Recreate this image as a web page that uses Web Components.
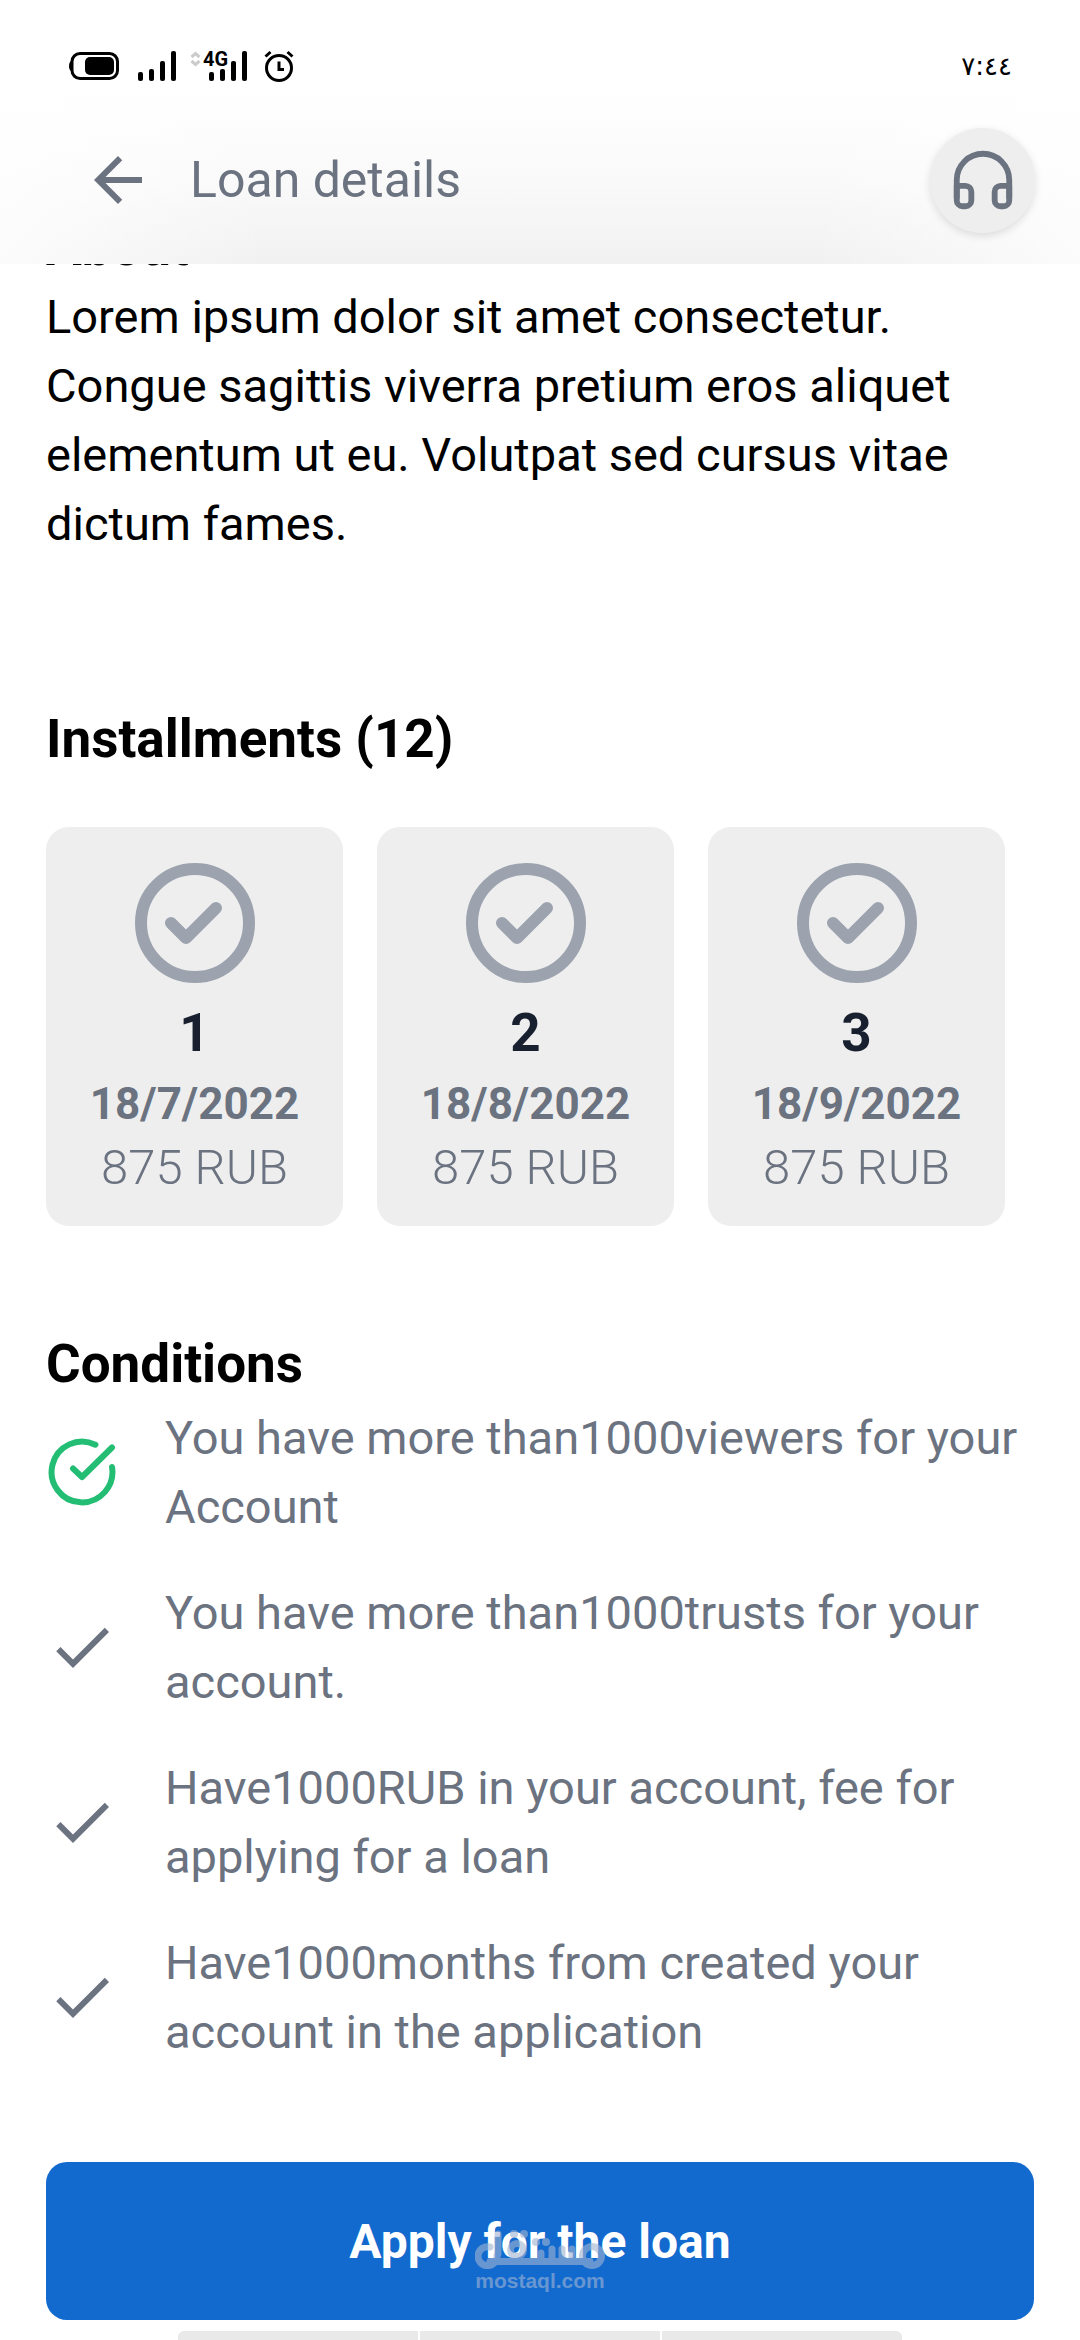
<!DOCTYPE html>
<html lang="en">
<head>
<meta charset="utf-8">
<meta name="viewport" content="width=device-width, initial-scale=1">
<title>Loan details</title>
<style>
  :root {
    --ink: #000;
    --muted: #6b7280;
    --soft: #9ca3af;
    --card: #eee;
    --brand: #126acf;
    --ok: #24bd74;
    --edge: 46px;
  }
  body { margin: 0; background: #fff; color: var(--ink); font: 400 47px/69px Roboto, "Noto Sans", sans-serif; }
</style>
</head>
<body>
<loan-page></loan-page>

<script>
const define = (name, html) => {
  const template = document.createElement('template');
  template.innerHTML = html;
  customElements.define(name, class extends HTMLElement {
    constructor() {
      super();
      this.attachShadow({ mode: 'open' }).append(template.content.cloneNode(true));
    }
  });
};

define('status-bar', `
  <style>
    :host { display: flex; align-items: center; justify-content: space-between; height: 96px; padding: 36px 68px 0 66px; box-sizing: border-box; color: #000; }
    svg { display: block; }
    time { font: 400 26px/34px "DejaVu Sans", sans-serif; }
    text { font: 700 20px "Liberation Sans Narrow", Roboto, sans-serif; }
  </style>
  <svg width="236" height="44" viewBox="66 44 236 44" role="img" aria-label="Battery, signal, 4G, alarm">
    <rect x="72" y="53.5" width="45.5" height="25" rx="8" fill="none" stroke="#000" stroke-width="3"/>
    <path d="M72 60.5q-3 1-3 5.5t3 5.5z"/>
    <rect x="85" y="57" width="29" height="18" rx="5"/>
    <g>
      <rect x="138" y="72" width="5" height="9" rx="2"/><rect x="149" y="69" width="5" height="12" rx="2"/>
      <rect x="160" y="61" width="5" height="20" rx="2"/><rect x="171" y="51" width="5" height="30" rx="2"/>
    </g>
    <g>
      <rect x="209" y="72" width="5" height="9" rx="2"/><rect x="220" y="69" width="5" height="12" rx="2"/>
      <rect x="231" y="61" width="5" height="20" rx="2"/><rect x="242" y="51" width="5" height="30" rx="2"/>
    </g>
    <path d="M191.500 57l4-3.500 4 3.500M191.500 61l4 3.500 4-3.500" fill="none" stroke="#ccc" stroke-width="3"/>
    <text x="203" y="66">4G</text>
    <g fill="none" stroke="#000" stroke-width="3">
      <circle cx="279" cy="68" r="12.5"/><path d="M279 61.500v8h5M265.500 56.500l5-4.500M292.500 56.500l-5-4.500"/>
    </g>
  </svg>
  <time>٧:٤٤</time>`);

define('app-header', `
  <style>
    :host {
      display: block; position: relative; z-index: 1;
      background: linear-gradient(to right, rgba(255,255,255,.75), rgba(255,255,255,0) 25%, rgba(255,255,255,0) 75%, rgba(255,255,255,.75)),
                  linear-gradient(#fff 35%, #f9f9f9 70%, #f1f1f1);
    }
    .bar { display: flex; align-items: center; height: 168px; padding: 0 45px 0 82px; }
    a { display: flex; color: var(--muted); }
    svg { display: block; }
    h1 { flex: 1; margin: 0 0 0 36px; font-size: 50px; font-weight: 400; line-height: 72px; color: var(--muted); }
    button { display: grid; place-items: center; width: 105px; height: 105px; padding: 0; border: 0; border-radius: 50%; background: var(--card); color: var(--muted); box-shadow: 0 3px 9px rgba(0,0,0,.12); }
  </style>
  <slot name="status"></slot>
  <div class="bar">
    <a href="#back" aria-label="Back">
      <svg width="72" height="72" viewBox="0 0 24 24" fill="currentColor"><path d="M20 11H7.830l5.590-5.590L12 4l-8 8 8 8 1.410-1.410L7.830 13H20v-2z"/></svg>
    </a>
    <h1><slot></slot></h1>
    <button type="button" aria-label="Support">
      <svg width="70" height="70" viewBox="0 0 24 24" fill="none" stroke="currentColor" stroke-width="2" stroke-linecap="round" stroke-linejoin="round"><path d="M3 18v-6a9 9 0 0 1 18 0v6"/><path d="M21 19a2 2 0 0 1-2 2h-1a2 2 0 0 1-2-2v-3a2 2 0 0 1 2-2h3zM3 19a2 2 0 0 0 2 2h1a2 2 0 0 0 2-2v-3a2 2 0 0 0-2-2H3z"/></svg>
    </button>
  </div>`);

define('loan-section', `
  <style>
    :host { display: block; }
    h2 { margin: 0 0 var(--title-gap, 0); font-size: 53px; line-height: 69px; font-weight: 700; }
  </style>
  <section><h2><slot name="title"></slot></h2><slot></slot></section>`);

define('installment-card', `
  <style>
    :host { display: flex; flex-direction: column; align-items: center; flex: 0 0 297px; box-sizing: border-box; padding: 24px 0 26px; border-radius: 23px; background: var(--card); color: var(--muted); }
    svg { display: block; color: var(--soft); }
    .no { margin: 4px 0; font-size: 53px; line-height: 69px; font-weight: 700; color: #182030; }
    .date { font-size: 44px; line-height: 64px; font-weight: 700; }
    .sum { font-size: 49px; line-height: 64px; font-weight: 300; }
  </style>
  <svg width="144" height="144" viewBox="0 0 24 24" fill="none" stroke="currentColor" stroke-width="2" stroke-linecap="round" stroke-linejoin="round" aria-hidden="true"><circle cx="12" cy="12" r="9"/><path d="M8 12l2.500 2.500 5-5"/></svg>
  <div class="no"><slot name="no"></slot></div>
  <div class="date"><slot name="date"></slot></div>
  <div class="sum"><slot></slot></div>`);

define('condition-item', `
  <style>
    :host { display: flex; align-items: center; gap: 47px; color: var(--muted); }
    svg { display: block; flex: none; }
    p { margin: 0; }
    .met { display: none; color: var(--ok); }
    :host([met]) .met { display: block; }
    :host([met]) .open { display: none; }
  </style>
  <svg class="met" width="72" height="72" viewBox="-36 -36 72 72" fill="none" stroke="currentColor" stroke-width="6" stroke-linecap="round" stroke-linejoin="round"><path d="M13.400-27.300A30.400 30.400 0 1 0 30-5M30-24.500L0 5l-9-8.500"/></svg>
  <svg class="open" width="72" height="72" viewBox="0 0 24 24" fill="currentColor"><path d="M9 16.170L4.830 12l-1.420 1.410L9 19 21 7l-1.410-1.410z"/></svg>
  <p><slot></slot></p>`);

define('apply-button', `
  <style>
    :host { display: grid; }
    button { grid-area: 1 / 1; height: 158px; border: 0; border-radius: 21px; background: var(--brand); color: #fff; font: inherit; font-size: 48px; font-weight: 700; }
    .mark { grid-area: 1 / 1; display: flex; flex-direction: column; align-items: center; justify-content: flex-end; padding-bottom: 27px; color: #a0b4d2; opacity: .6; pointer-events: none; }
    svg { display: block; }
    .site { font: 700 21px/24px "Liberation Sans", sans-serif; }
  </style>
  <button type="button"><slot></slot></button>
  <div class="mark">
    <svg width="130" height="42" viewBox="0 0 130 42" fill="none" stroke="currentColor" stroke-width="7" stroke-linecap="round" aria-hidden="true">
      <path d="M22 28.500a9.500 9.500 0 1 1-7-8.500M23 7v20M15 34.500h100M66 26v7M77 22v11M87 22v11M97 22v11"/>
      <circle cx="117" cy="29" r="9.500"/><circle cx="42" cy="23" r="6.500"/>
      <g fill="currentColor" stroke="none"><circle cx="39" cy="7" r="4"/><circle cx="49" cy="7" r="4"/><circle cx="61" cy="15" r="4"/><circle cx="71" cy="15" r="4"/></g>
    </svg>
    <span class="site">mostaql.com</span>
  </div>`);

define('tab-strip', `
  <style>
    :host { display: grid; grid-template-columns: repeat(3, 1fr); gap: 2px; height: 9px; margin: 0 16.500%; overflow: hidden; border-radius: 6px 6px 0 0; }
    i { background: #e9e9e9; }
  </style>
  <i></i><i></i><i></i>`);

define('loan-page', `
  <style>
    :host { display: block; overflow: hidden; }
    main { margin-top: -51px; padding: 0 var(--edge); }
    p { margin: 0; }
    .installments { margin-top: 147px; --title-gap: 53px; }
    .cards { display: flex; gap: 34px; overflow-x: auto; scrollbar-width: none; }
    .conditions { margin-top: 104px; --title-gap: 4px; }
    .list { display: flex; flex-direction: column; gap: 37px; }
    apply-button { margin: 96px 0 11px; }
  </style>
  <app-header><status-bar slot="status"></status-bar>Loan details</app-header>
  <main>
    <loan-section><span slot="title">About</span>
      <p>Lorem ipsum dolor sit amet consectetur. Congue sagittis viverra pretium eros aliquet elementum ut eu. Volutpat sed cursus vitae dictum fames.</p>
    </loan-section>
    <loan-section class="installments"><span slot="title">Installments (12)</span>
      <div class="cards">
        <installment-card><span slot="no">1</span><span slot="date">18/7/2022</span>875 RUB</installment-card>
        <installment-card><span slot="no">2</span><span slot="date">18/8/2022</span>875 RUB</installment-card>
        <installment-card><span slot="no">3</span><span slot="date">18/9/2022</span>875 RUB</installment-card>
      </div>
    </loan-section>
    <loan-section class="conditions"><span slot="title">Conditions</span>
      <div class="list" role="list">
        <condition-item role="listitem" met>You have more than1000viewers for your Account</condition-item>
        <condition-item role="listitem">You have more than1000trusts for your account.</condition-item>
        <condition-item role="listitem">Have1000RUB in your account, fee for applying for a loan</condition-item>
        <condition-item role="listitem">Have1000months from created your account in the application</condition-item>
      </div>
    </loan-section>
    <apply-button>Apply for the loan</apply-button>
  </main>
  <tab-strip></tab-strip>`);
</script>
</body>
</html>
